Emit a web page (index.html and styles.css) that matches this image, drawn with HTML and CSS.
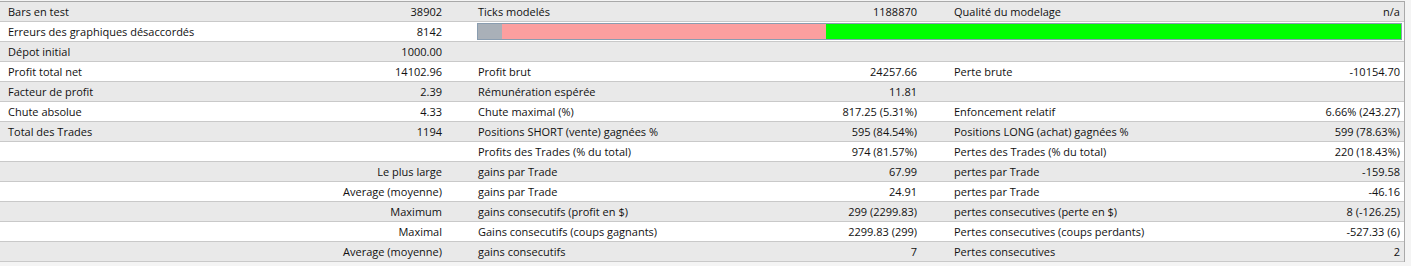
FILE: index.html
```html
<!DOCTYPE html>
<html lang="fr">
<head>
<meta charset="utf-8">
<title>Rapport de test</title>
<link rel="stylesheet" href="styles.css">
</head>
<body>
<div class="report">
  <div class="row odd">
    <div class="grp g1"><span class="lbl">Bars en test</span><span class="val">38902</span></div>
    <div class="grp g2"><span class="lbl">Ticks modelés</span><span class="val">1188870</span></div>
    <div class="grp g3"><span class="lbl">Qualité du modelage</span><span class="val">n/a</span></div>
  </div>
  <div class="row even">
    <div class="grp g1"><span class="lbl">Erreurs des graphiques désaccordés</span><span class="val">8142</span></div>
    <div class="barcell">
      <div class="bar">
        <div class="seg s-gray"></div>
        <div class="seg s-pink"></div>
        <div class="seg s-green"></div>
      </div>
    </div>
  </div>
  <div class="row odd">
    <div class="grp g1"><span class="lbl">Dépot initial</span><span class="val">1000.00</span></div>
    <div class="grp g2"></div>
    <div class="grp g3"></div>
  </div>
  <div class="row even">
    <div class="grp g1"><span class="lbl">Profit total net</span><span class="val">14102.96</span></div>
    <div class="grp g2"><span class="lbl">Profit brut</span><span class="val">24257.66</span></div>
    <div class="grp g3"><span class="lbl">Perte brute</span><span class="val">-10154.70</span></div>
  </div>
  <div class="row odd">
    <div class="grp g1"><span class="lbl">Facteur de profit</span><span class="val">2.39</span></div>
    <div class="grp g2"><span class="lbl">Rémunération espérée</span><span class="val">11.81</span></div>
    <div class="grp g3"></div>
  </div>
  <div class="row even">
    <div class="grp g1"><span class="lbl">Chute absolue</span><span class="val">4.33</span></div>
    <div class="grp g2"><span class="lbl">Chute maximal (%)</span><span class="val">817.25 (5.31%)</span></div>
    <div class="grp g3"><span class="lbl">Enfoncement relatif</span><span class="val">6.66% (243.27)</span></div>
  </div>
  <div class="row odd">
    <div class="grp g1"><span class="lbl">Total des Trades</span><span class="val">1194</span></div>
    <div class="grp g2"><span class="lbl">Positions SHORT (vente) gagnées %</span><span class="val">595 (84.54%)</span></div>
    <div class="grp g3"><span class="lbl">Positions LONG (achat) gagnées %</span><span class="val">599 (78.63%)</span></div>
  </div>
  <div class="row even">
    <div class="grp g1"></div>
    <div class="grp g2"><span class="lbl">Profits des Trades (% du total)</span><span class="val">974 (81.57%)</span></div>
    <div class="grp g3"><span class="lbl">Pertes des Trades (% du total)</span><span class="val">220 (18.43%)</span></div>
  </div>
  <div class="row odd">
    <div class="grp g1"><span class="lbl"></span><span class="val">Le plus large</span></div>
    <div class="grp g2"><span class="lbl">gains par Trade</span><span class="val">67.99</span></div>
    <div class="grp g3"><span class="lbl">pertes par Trade</span><span class="val">-159.58</span></div>
  </div>
  <div class="row even">
    <div class="grp g1"><span class="lbl"></span><span class="val">Average (moyenne)</span></div>
    <div class="grp g2"><span class="lbl">gains par Trade</span><span class="val">24.91</span></div>
    <div class="grp g3"><span class="lbl">pertes par Trade</span><span class="val">-46.16</span></div>
  </div>
  <div class="row odd">
    <div class="grp g1"><span class="lbl"></span><span class="val">Maximum</span></div>
    <div class="grp g2"><span class="lbl">gains consecutifs (profit en $)</span><span class="val">299 (2299.83)</span></div>
    <div class="grp g3"><span class="lbl">pertes consecutives (perte en $)</span><span class="val">8 (-126.25)</span></div>
  </div>
  <div class="row even">
    <div class="grp g1"><span class="lbl"></span><span class="val">Maximal</span></div>
    <div class="grp g2"><span class="lbl">Gains consecutifs (coups gagnants)</span><span class="val">2299.83 (299)</span></div>
    <div class="grp g3"><span class="lbl">Pertes consecutives (coups perdants)</span><span class="val">-527.33 (6)</span></div>
  </div>
  <div class="row odd">
    <div class="grp g1"><span class="lbl"></span><span class="val">Average (moyenne)</span></div>
    <div class="grp g2"><span class="lbl">gains consecutifs</span><span class="val">7</span></div>
    <div class="grp g3"><span class="lbl">Pertes consecutives</span><span class="val">2</span></div>
  </div>
</div>
</body>
</html>
```
FILE: styles.css
```css
html, body {
  margin: 0;
  padding: 0;
  background: #f4f4f4;
}
body {
  padding-top: 1px;
  font-family: "Open Sans", "Noto Sans", "DejaVu Sans", sans-serif;
  font-size: 11px;
  color: #111111;
}
.report {
  width: 1404px;
  border-top: 1px solid #a9a9a9;
  border-right: 1px solid #a9a9a9;
}
.row {
  display: flex;
  height: 19px;
  border-bottom: 1px solid #c9c9c9;
}
.odd { background: #e9e9e9; }
.even { background: #ffffff; }
.grp {
  display: flex;
  align-items: center;
  justify-content: space-between;
  box-sizing: border-box;
  white-space: nowrap;
}
.g1 { width: 446px; padding-left: 8px; padding-right: 4px; }
.g2 { width: 475px; padding-left: 32px; padding-right: 4px; }
.g3 { width: 483px; padding-left: 33px; padding-right: 4px; }
.lbl, .val { line-height: 19px; }
.barcell {
  flex: 1;
  box-sizing: border-box;
  padding: 1px 2px 0 31px;
  display: flex;
}
.bar {
  flex: 1;
  height: 17px;
  border: 1px solid #8a9db0;
  box-sizing: border-box;
  display: flex;
}
.seg { height: 100%; }
.s-gray { width: 24px; background: #a9b0b8; }
.s-pink { width: 324px; background: #fc9f9f; }
.s-green { flex: 1; background: #00ff00; }
```
